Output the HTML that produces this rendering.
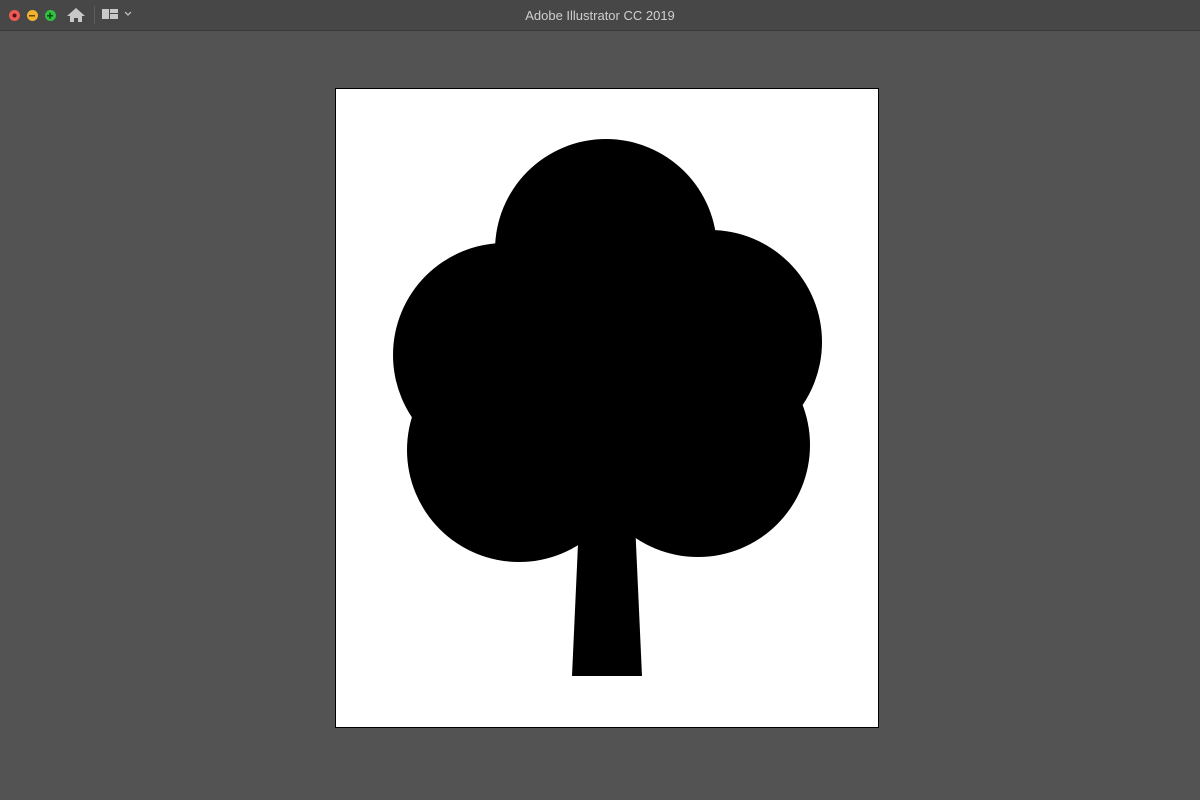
<!DOCTYPE html>
<html><head><meta charset="utf-8"><style>
html,body{margin:0;padding:0;width:1200px;height:800px;overflow:hidden;background:#535353;font-family:"Liberation Sans",sans-serif}
.bar{position:absolute;left:0;top:0;width:1200px;height:30px;background:#474747;border-bottom:1px solid #3a3a3a}
.title{position:absolute;left:0;width:1200px;top:8px;text-align:center;color:#cfcfcf;font-size:13px}
.dot{position:absolute;top:10px;width:11px;height:11px;border-radius:50%}
</style></head><body>
<div class="bar">
<div class="dot" style="left:9px;background:#ec5a55"></div>
<div class="dot" style="left:27px;background:#f0b32f"></div>
<div class="dot" style="left:45px;background:#2ec03f"></div>
<svg style="position:absolute;left:0;top:0" width="140" height="30">
<circle cx="14.5" cy="15.5" r="2" fill="#5a1010"/>
<rect x="29" y="15" width="6" height="1.5" fill="#6a4500"/>
<path d="M47 15.7h6M50 12.7v6" stroke="#0b4a12" stroke-width="1.5"/>
<path d="M67 16 L76 8 L85 16 H82 V22 H78 V18 H74 V22 H70 V16 Z" fill="#c8c8c8"/>
<rect x="94" y="6" width="1" height="18" fill="#5e5e5e"/>
<rect x="102" y="9" width="7" height="10" fill="#c8c8c8"/>
<rect x="110" y="9" width="8" height="4" fill="#c8c8c8"/>
<rect x="110" y="14" width="8" height="5" fill="#c8c8c8"/>
<path d="M125 12 L128 15 L131 12" stroke="#c8c8c8" stroke-width="1.2" fill="none"/>
</svg>
<div class="title">Adobe Illustrator CC 2019</div>
</div>
<svg style="position:absolute;left:0;top:0" width="1200" height="800">
<rect x="335.5" y="88.5" width="543" height="639" fill="#fff" stroke="#000"/>
<g fill="#000">
<circle cx="606" cy="250" r="111"/>
<circle cx="505" cy="355" r="112"/>
<circle cx="710" cy="342" r="112"/>
<circle cx="519" cy="450" r="112"/>
<circle cx="698" cy="445" r="112"/>
<polygon points="500,300 720,300 730,510 500,510"/>
<polygon points="580,500 634,500 642,676 572,676"/>
</g>
</svg>
</body></html>
